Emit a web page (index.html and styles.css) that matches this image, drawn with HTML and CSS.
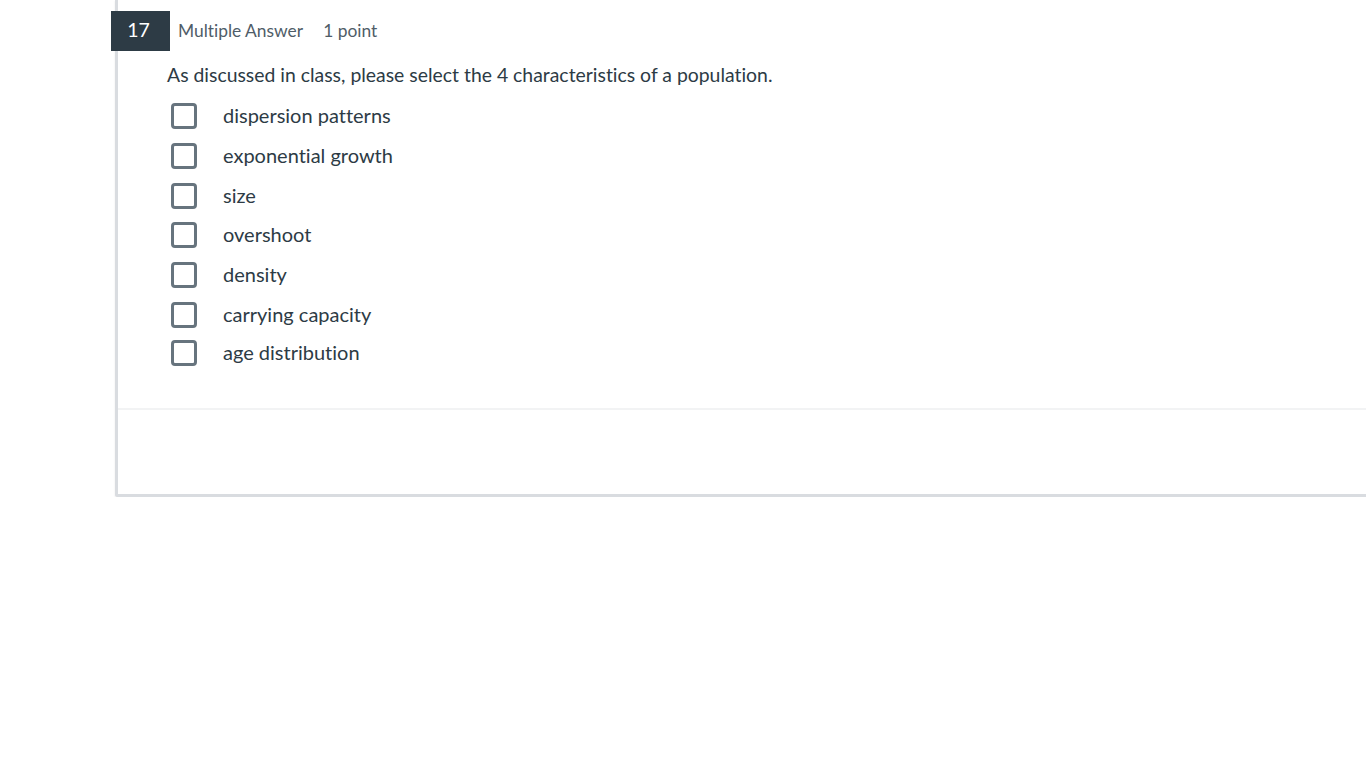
FILE: index.html
```html
<!DOCTYPE html>
<html>
<head>
<meta charset="utf-8">
<link rel="stylesheet" href="styles.css">
</head>
<body>
<div class="page">
  <div class="card">
    <div class="header">
      <div class="badge">17</div>
      <span class="type">Multiple Answer</span>
      <span class="points">1 point</span>
    </div>
    <div class="body">
      <p class="question">As discussed in class, please select the 4 characteristics of a population.</p>
      <ul class="options">
        <li class="opt h41"><span class="box"></span><span class="label">dispersion patterns</span></li>
        <li class="opt h40"><span class="box"></span><span class="label">exponential growth</span></li>
        <li class="opt h39"><span class="box"></span><span class="label">size</span></li>
        <li class="opt h40"><span class="box"></span><span class="label">overshoot</span></li>
        <li class="opt h40"><span class="box"></span><span class="label">density</span></li>
        <li class="opt h39"><span class="box"></span><span class="label">carrying capacity</span></li>
        <li class="opt h38"><span class="box"></span><span class="label">age distribution</span></li>
      </ul>
    </div>
    <div class="footer"></div>
  </div>
</div>
</body>
</html>
```

FILE: styles.css
```css
html, body {
  margin: 0;
  padding: 0;
  background: #ffffff;
  font-family: Lato, "Open Sans", sans-serif;
  font-variant-ligatures: none;
  color: #2d3b45;
}
.page {
  padding-left: 115px;
}
.card {
  border-left: 3px solid #d9dce0;
  border-bottom: 3px solid #d9dce0;
  border-bottom-left-radius: 3px;
  box-shadow: 0 1px 2px rgba(0,0,0,0.1);
  height: 497px;
  box-sizing: border-box;
  padding-top: 11px;
  display: flex;
  flex-direction: column;
}
.header {
  display: flex;
  align-items: center;
  height: 40px;
  margin-left: -7px;
}
.badge {
  width: 59px;
  height: 40px;
  background: #2d3b45;
  color: #ffffff;
  font-size: 19.5px;
  display: flex;
  align-items: center;
  justify-content: center;
  box-sizing: border-box;
  padding-right: 4px;
  padding-bottom: 3px;
}
.type {
  margin-left: 8px;
  font-size: 17.4px;
  color: #4f5d68;
  position: relative;
  top: -1px;
}
.points {
  margin-left: 20px;
  font-size: 17.4px;
  color: #4f5d68;
  position: relative;
  top: -1px;
}
.body {
  padding-left: 49px;
  height: 359px;
  box-sizing: border-box;
  border-bottom: 2px solid #f2f3f4;
}
.question {
  margin: 12px 0 0 0;
  font-size: 19.4px;
  line-height: 24px;
}
.options {
  list-style: none;
  margin: 8px 0 0 0;
  padding: 0;
}
.opt {
  display: flex;
  align-items: center;
  margin-left: 4px;
}
.h41 { height: 41px; }
.h40 { height: 40px; }
.h39 { height: 39px; }
.h38 { height: 38px; }
.box {
  width: 26px;
  height: 26px;
  box-sizing: border-box;
  border: 3px solid #67747e;
  border-radius: 4px;
  flex: none;
}
.label {
  margin-left: 26px;
  font-size: 20px;
  position: relative;
  top: -1px;
}
.footer {
  flex: 1;
}
```
